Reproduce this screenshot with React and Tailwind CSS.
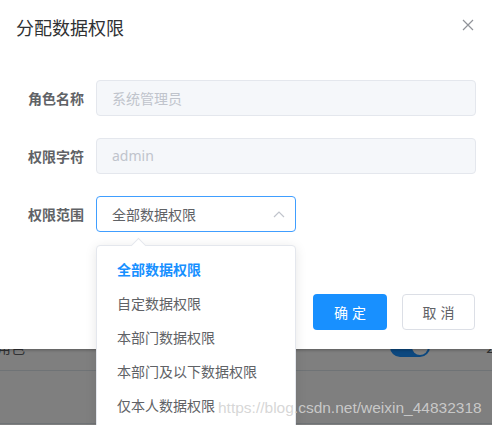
import React from "react";

const FONT = "font-['Noto_Sans_CJK_SC','Noto_Sans',sans-serif]";

function FormRow({ label, children }) {
  return (
    <div className="flex items-center h-9">
      <label className="w-20 shrink-0 pr-3 text-right text-sm font-bold text-[#606266]">{label}</label>
      {children}
    </div>
  );
}

export default function App() {
  const items = ["全部数据权限", "自定数据权限", "本部门数据权限", "本部门及以下数据权限", "仅本人数据权限"];
  return (
    <div className={`relative w-[492px] h-[425px] overflow-hidden bg-white ${FONT}`}>
      {/* background page */}
      <div className="flex flex-col">
        <div className="h-[324px]" />
        <div className="h-[47px] flex items-center border-b border-[#dfe6ec] text-sm text-[#606266]">
          <span className="ml-[-3px] w-[120px]">角色</span>
          <div className="ml-auto mr-[56px] w-10 h-5 rounded-full bg-[#1890ff] relative">
            <span className="absolute right-[2px] top-[2px] w-4 h-4 rounded-full bg-white" />
          </div>
          <span className="mr-[-2px]">2</span>
        </div>
        <div className="h-[53px] border-b border-[#dfe6ec]" />
      </div>

      {/* overlay */}
      <div className="absolute inset-0 bg-black/50" />

      {/* dialog */}
      <div className="absolute inset-x-0 top-0 h-[349px] bg-white shadow-[0_1px_3px_rgba(0,0,0,0.3)] flex flex-col px-4">
        <div className="flex items-start pt-[15px]">
          <span className="text-[18px] leading-6 text-[#303133]">分配数据权限</span>
          <svg className="ml-auto mr-[2px] mt-[4px]" width="12" height="12" viewBox="0 0 12 12">
            <path d="M1 1L11 11M11 1L1 11" stroke="#909399" strokeWidth="1.2" />
          </svg>
        </div>

        <div className="flex flex-col gap-[22px] mt-[41px]">
          <FormRow label="角色名称">
            <div className="flex-1 h-9 rounded border border-[#e4e7ed] bg-[#f5f7fa] px-[15px] flex items-center text-sm text-[#c0c4cc]">
              系统管理员
            </div>
          </FormRow>
          <FormRow label="权限字符">
            <div className="flex-1 h-9 rounded border border-[#e4e7ed] bg-[#f5f7fa] px-[15px] flex items-center text-sm text-[#c0c4cc] font-['Noto_Sans','Noto_Sans_CJK_SC',sans-serif]">
              admin
            </div>
          </FormRow>
          <FormRow label="权限范围">
            <div className="w-[200px] h-9 rounded border border-[#409eff] bg-white pl-[15px] pr-[10px] flex items-center text-sm text-[#606266]">
              <span>全部数据权限</span>
              <svg className="ml-auto" width="12" height="8" viewBox="0 0 12 8">
                <path d="M1 7L6 2L11 7" fill="none" stroke="#c0c4cc" strokeWidth="1.2" />
              </svg>
            </div>
          </FormRow>
        </div>

        <div className="flex justify-end gap-[15px] mt-[62px] pr-px">
          <button className="w-[74px] h-9 rounded bg-[#1890ff] text-white text-sm flex items-center justify-center gap-1">
            <span>确</span><span>定</span>
          </button>
          <button className="w-[73px] h-9 rounded border border-[#dcdfe6] bg-white text-[#606266] text-sm flex items-center justify-center gap-1">
            <span>取</span><span>消</span>
          </button>
        </div>
      </div>

      {/* dropdown */}
      <div className="absolute left-[96px] top-[245px] w-[200px] rounded border border-[#e4e7ed] bg-white shadow-[0_2px_12px_rgba(0,0,0,0.1)] py-[6px]">
        <span className="absolute -top-[6px] left-[36px] w-[11px] h-[11px] rotate-45 bg-white border-l border-t border-[#e4e7ed]" />
        {items.map((t, i) => (
          <div
            key={t}
            className={`relative h-[34px] px-5 flex items-center text-sm ${i === 0 ? "text-[#1890ff] font-bold" : "text-[#606266]"}`}
          >
            {t}
          </div>
        ))}
      </div>

      {/* watermark */}
      <div className="absolute left-[218px] top-[396px] text-[15.5px] leading-normal font-['Liberation_Sans',sans-serif] text-[rgba(210,210,210,0.9)] whitespace-nowrap pointer-events-none">
        https://blog.csdn.net/weixin_44832318
      </div>
    </div>
  );
}
